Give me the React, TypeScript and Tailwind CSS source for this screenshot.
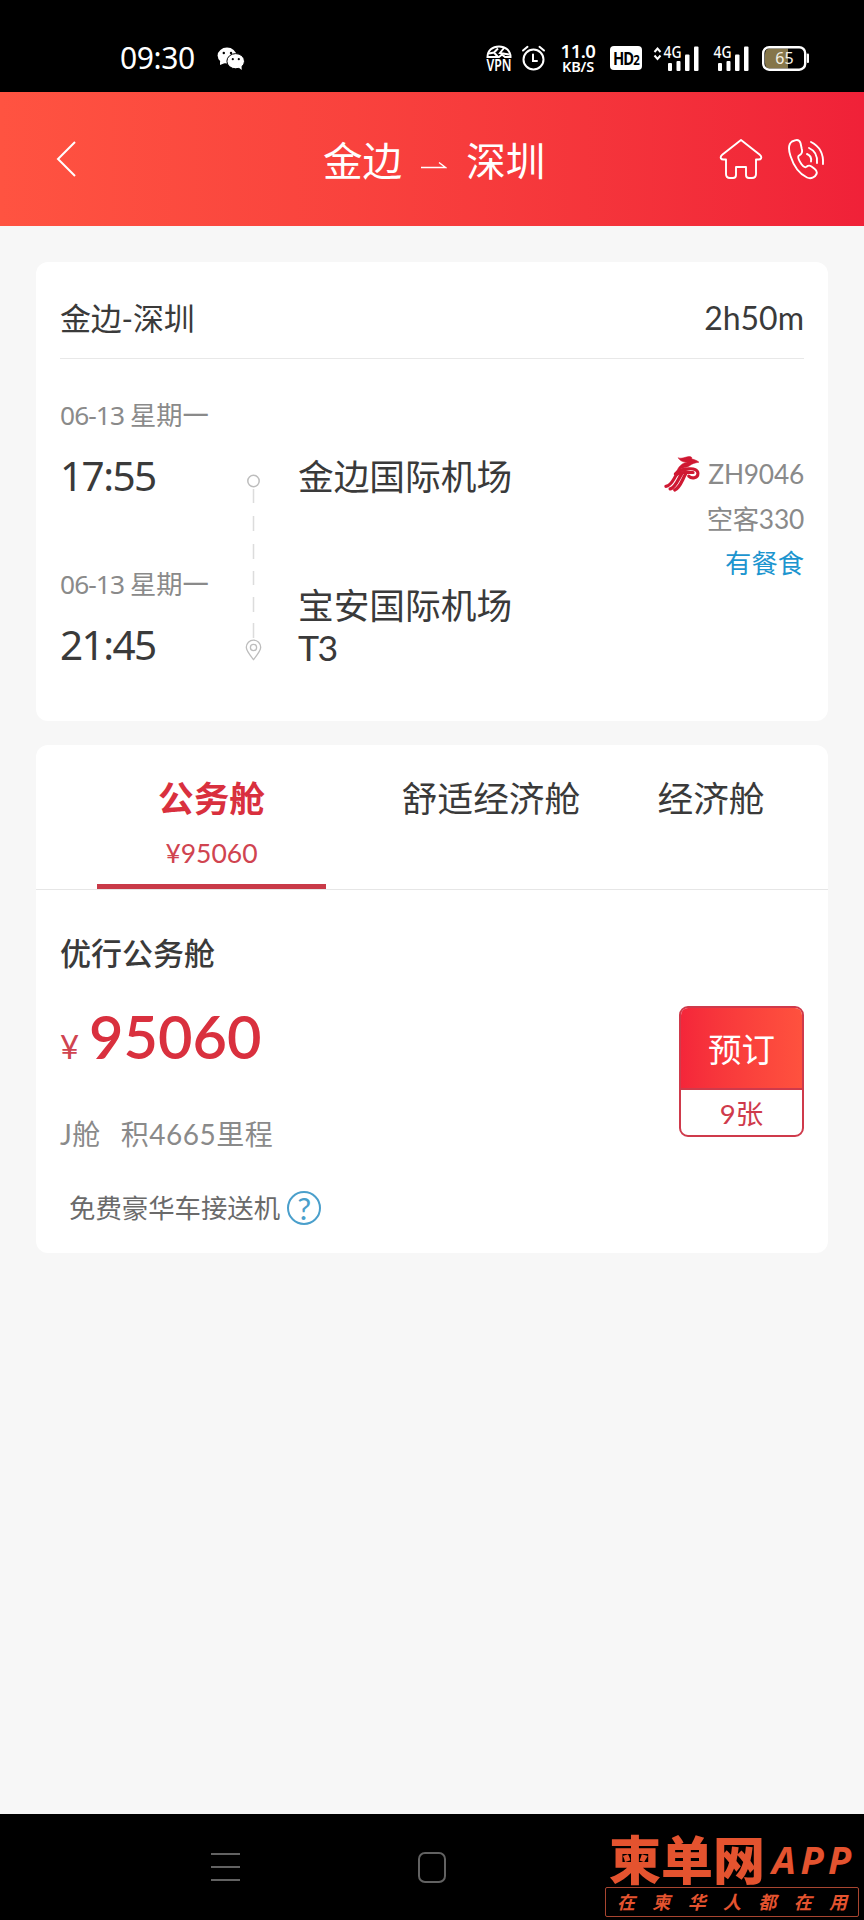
import React from 'react';
import { clsx } from 'clsx';

interface Leg {
  date: string;
  time: string;
  airport: string;
  terminal?: string;
}

interface Cabin {
  name: string;
  price?: string;
  className: string;
}

const legs: Leg[] = [
  { date: '06-13', time: '17:55', airport: '金边国际机场' },
  { date: '06-13', time: '21:45', airport: '宝安国际机场', terminal: 'T3' },
];

const cabins: Cabin[] = [
  { name: '公务舱', price: '¥95060', className: 'ml-[61px] w-[229px]' },
  { name: '舒适经济舱', className: 'ml-[70px] w-[190px]' },
  { name: '经济舱', className: 'ml-[65px] w-[120px]' },
];

const WechatIcon = () => (
  <svg className="ml-[20px] h-[23px] w-[28px]" viewBox="0 0 28 23">
    <ellipse cx="10" cy="8.6" rx="9.4" ry="8" fill="#fff" />
    <path d="M3 14l0 4 5-2z" fill="#fff" />
    <ellipse cx="18.7" cy="14.2" rx="8.8" ry="7.6" fill="#fff" stroke="#000" strokeWidth="1" />
    <path d="M21 20l3.8 3-.4-5z" fill="#fff" />
    <circle cx="6.8" cy="6" r="1.2" />
    <circle cx="14" cy="6" r="1.2" />
    <circle cx="15.8" cy="12.2" r="1.1" />
    <circle cx="21.8" cy="12.2" r="1.1" />
  </svg>
);

const VpnIcon = () => (
  <svg className="h-[28px] w-[26px] overflow-visible" viewBox="0 0 26 28" fill="none" stroke="#fff">
    <path d="M1.500 13C1.500 6.500 6.500 2.500 13 2.500s11.500 4 11.500 10.500H19l-3-2.500-3 2.500z" strokeWidth="2" />
    <path d="M3 9.500l5-1 4-4M8 8.500l4 4.500M18 4l-4 5 9 1.500" strokeWidth="2" />
    <text x="13" y="27" textAnchor="middle" fill="#fff" stroke="none" fontSize="16" fontWeight="600" textLength="25" lengthAdjust="spacingAndGlyphs">VPN</text>
  </svg>
);

const AlarmIcon = () => (
  <svg className="ml-[9px] h-[28px] w-[25px]" viewBox="0 0 25 28" fill="none" stroke="#fff" strokeWidth="2" strokeLinecap="round">
    <circle cx="12.500" cy="15.500" r="10" />
    <path d="M12 10.500V17h4M2 6.500l4.500-3.700M23 6.500l-4.500-3.700" />
  </svg>
);

const SignalIcon = ({ arrows }: { arrows?: boolean }) => (
  <svg
    className={clsx('h-[28px] overflow-visible', arrows ? 'ml-[11px] w-[47px]' : 'ml-[14px] w-[36px]')}
    viewBox={arrows ? '0 0 47 28' : '11 0 36 28'}
    fill="#fff"
  >
    {arrows && <path d="M1.500 8l3-3.500 3 3.500M1.500 11.500l3 3.500 3-3.500" fill="none" stroke="#fff" strokeWidth="2" />}
    <text x="10.500" y="14" fontSize="16" fontWeight="500" textLength="18" lengthAdjust="spacingAndGlyphs">4G</text>
    <rect x="15" y="19" width="4" height="8" rx="1" />
    <rect x="23.500" y="17" width="4" height="10" rx="1" />
    <rect x="32" y="10.500" width="4.500" height="16.500" rx="1" />
    <rect x="41" y="2.500" width="4.500" height="24.500" rx="1" />
  </svg>
);

const BatteryIcon = () => (
  <svg className="ml-[12px] h-[28px] w-[48px]" viewBox="0 0 48 28">
    <path d="M8 4.500h18v20H8q-5 0-5-6v-8q0-6 5-6z" fill="#85764a" />
    <rect x="1.200" y="3.200" width="42" height="22.500" rx="6" fill="none" stroke="#fff" strokeWidth="2.400" />
    <rect x="44.800" y="9.500" width="2.200" height="9.500" rx="1" fill="#fff" />
    <text x="22.500" y="20" textAnchor="middle" fill="#f4f1e4" fontSize="16">65</text>
  </svg>
);

const StatusBar = () => (
  <div className="flex h-[92px] items-center bg-black pt-[24px] pl-[120px] font-['Noto_Sans','Noto_Sans_CJK_SC',sans-serif] text-white">
    <span className="w-[77px] text-[30px] leading-none tracking-[-0.4px]">09:30</span>
    <WechatIcon />
    <div className="ml-[241px] flex items-center">
      <VpnIcon />
      <AlarmIcon />
      <div className="ml-[14px] flex w-[36px] flex-col items-center font-semibold">
        <span className="text-[18.500px] leading-[15px] tracking-[-0.5px]">11.0</span>
        <span className="text-[14.500px] leading-[16px] tracking-[-0.2px]">KB/S</span>
      </div>
      <div className="ml-[14px] flex h-[24px] w-[32px] items-center justify-center rounded-[4px] bg-white text-[18px] font-bold leading-none tracking-[-1px] text-black">
        <span className="inline-block origin-center scale-x-[0.820]">HD<span className="text-[14px]">2</span></span>
      </div>
      <SignalIcon arrows />
      <SignalIcon />
      <BatteryIcon />
    </div>
  </div>
);

const TitleBar = () => (
  <header className="flex h-[134px] items-center bg-linear-to-r from-[#ff5341] to-[#f02138] pl-[56px] text-white">
    <svg className="h-[38px] w-[22px]" viewBox="0 0 22 38" fill="none" stroke="#fff" strokeWidth="2">
      <path d="M19 2L2 19l17 17" />
    </svg>
    <h1 className="ml-[245px] flex items-center whitespace-nowrap pt-[4px] text-[39.600px] leading-[50px]">
      <span>金边</span>
      <svg className="mr-[19px] ml-[19px] mt-[12px] h-[12px] w-[26px]" viewBox="0 0 26 12" fill="none" stroke="#fff" strokeWidth="1.500">
        <path d="M0 6.500h24.500L18 1.500" />
      </svg>
      <span>深圳</span>
    </h1>
    <svg className="ml-[174px] h-[42px] w-[44px]" viewBox="0 0 44 42" fill="none" stroke="#fff" strokeWidth="1.900" strokeLinejoin="round">
      <path d="M22 2L3.500 16.500q-2.500 2-1.500 4 .5 1 2.500 1H7V36q0 4 4 4h3q3 0 3-3v-8h10v8q0 3 3 3h3q4 0 4-4V21.500h2.500q2 0 2.500-1 1-2-1.500-4z" />
    </svg>
    <svg className="ml-[24px] h-[42px] w-[40px]" viewBox="0 0 40 42" fill="none" stroke="#fff" strokeWidth="1.900" strokeLinecap="round" strokeLinejoin="round">
      <path d="M8 2.300L5 3.500C1.500 6 1.500 12 3.500 18c3 9.500 9 18 16.500 21.500 4 1.800 8-.2 9.500-3.500.8-2-.2-3.800-2-5.200l-3-2.300c-1.800-1.300-3.600-1-5 .3-2 1.200-3.200.2-5-2.500-2.200-3.300-4-6.800-3-8.300l2.300-1.700c1.700-1.500 1.600-3 1-5.300L13.500 5C12.500 2.300 10.500 1.500 8 2.300z" />
      <path d="M20 16q5 2 4 7.500M22 10q9 4 8 15M24 4q13 6.500 12 22" />
    </svg>
  </header>
);

const AirlineLogo = () => (
  <svg className="mr-[8px] h-[36px] w-[36px]" viewBox="0 0 35 35" fill="none" stroke="#cf1832" strokeLinecap="round" strokeLinejoin="round">
    <path d="M14 2c4 .8 6-.8 10-1.500 2.500-.3 3.500 1 3 2.500 2 .3 4.500 1 7 3-4 .8-6.500 1.200-9.500 3.700-3.500 2-8 1.500-12 5.300 1.500-5.500 6-8.500 11-9.500-3 .6-7.500.4-9.500-3.500z" fill="#cf1832" strokeWidth=".5" />
    <path d="M11 17.500c3-4 8-4.500 13-5 5-.6 9 1 9 4.500 0 4.500-6 5.500-9 2.500" strokeWidth="3" />
    <path d="M1.800 29.500c5-.5 7-6 9.500-10 1.500-2.500 5-3.500 8-3.500h9" strokeWidth="3" />
    <path d="M6 32c5-1 7.500-9 11-14.500M10.500 33c5-2 7-9.500 10.500-15.500" strokeWidth="3.200" />
  </svg>
);

const Timeline = () => (
  <svg className="mt-[115px] h-[188px] w-[19px]" viewBox="0 0 19 188" fill="none" stroke="#bdbdbd">
    <circle cx="9.500" cy="7" r="5.700" strokeWidth="1.500" />
    <path d="M9.500 15v14M9.500 42v15M9.500 70v15M9.500 97v14M9.500 123v15M9.500 149v15" stroke="#dcdcdc" strokeWidth="1.500" />
    <path d="M9.500 185.500C6 181 2.300 177 2.300 173.300a7.200 7.200 0 0 1 14.400 0c0 3.700-3.700 7.700-7.200 12.200z" strokeWidth="1.300" />
    <circle cx="9.500" cy="173.500" r="3.100" strokeWidth="1.300" />
  </svg>
);

const FlightCard = () => (
  <section className="h-[459px] rounded-[12px] bg-white px-[24px] text-[#3a3a3a]">
    <div className="flex h-[97px] items-center justify-between border-b border-[#e8e8e8] pt-[15px] text-[31px] leading-[40px]">
      <span className="tracking-[-0.2px]">金边-深圳</span>
      <span className="text-[32px]">2h50m</span>
    </div>

    <div className="flex">
      <div className="w-[184px] pt-[39px]">
        {legs.map((leg, i) => (
          <div key={leg.time} className={clsx(i > 0 && 'mt-[67px]')}>
            <div className="flex h-[36px] items-center whitespace-nowrap text-[26.300px] text-[#8a8a8a]">
              <span className="w-[70px] font-['Noto_Sans',sans-serif] tracking-[-0.900px]">{leg.date}</span>
              <span>星期一</span>
            </div>
            <div className="mt-[18px] flex h-[48px] items-center font-['Noto_Sans',sans-serif] text-[40.500px] tracking-[-1.600px]">
              {leg.time}
            </div>
          </div>
        ))}
      </div>

      <Timeline />

      <div className="ml-[35px] w-[230px] pt-[97px] text-[35.700px] leading-[42px]">
        {legs.map((leg, i) => (
          <div key={leg.airport} className={clsx(i > 0 && 'mt-[87px]')}>
            <p className="whitespace-nowrap">{leg.airport}</p>
            {leg.terminal && <p className="tracking-[-1.500px]">{leg.terminal}</p>}
          </div>
        ))}
      </div>

      <div className="flex flex-1 flex-col items-end pt-[93px] text-[26.300px] leading-[44.700px] text-[#8a8a8a]">
        <div className="flex items-center">
          <AirlineLogo />
          <span className="tracking-[-0.2px]">ZH9046</span>
        </div>
        <span className="tracking-[-0.2px]">空客330</span>
        <span className="text-[#1c95cf]">有餐食</span>
      </div>
    </div>
  </section>
);

const CabinCard = () => (
  <section className="mt-[24px] h-[508px] rounded-[12px] bg-white text-[#3a3a3a]">
    {/* Tabs */}
    <div className="flex h-[145px] border-b border-[#e6e6e6]">
      {cabins.map((cabin) => (
        <div
          key={cabin.name}
          className={clsx(
            'flex h-[144px] flex-col items-center pt-[30px] text-[35.700px] leading-[48px]',
            cabin.className,
            cabin.price && 'border-b-[5px] border-[#c93a48] font-bold text-[#d9303e]'
          )}
        >
          <span className="whitespace-nowrap">{cabin.name}</span>
          {cabin.price && <span className="mt-[12px] text-[26.500px] font-normal leading-[36px] text-[#d04450]">{cabin.price}</span>}
        </div>
      ))}
    </div>

    {/* Fare */}
    <div className="flex justify-between px-[24px]">
      <div>
        <h2 className="mt-[43px] text-[31px] font-medium leading-[40px]">优行公务舱</h2>
        <div className="mt-[28px] flex h-[72px] items-baseline text-[#d9303e]">
          <span className="w-[29px] text-[33px] leading-none text-[#d04450]">¥</span>
          <span className="text-[59.500px] font-semibold leading-[70px]">95060</span>
        </div>
        <div className="mt-[43px] flex gap-[20px] text-[28px] leading-[36px] tracking-[0.500px] text-[#8a8a8a]">
          <span>J舱</span>
          <span>积4665里程</span>
        </div>
        <div className="mt-[38px] flex items-center pl-[9px] text-[26.400px] leading-[36px] text-[#6a6a6a]">
          免费豪华车接送机
          <span className="ml-[7px] flex size-[34px] items-center justify-center rounded-full border-2 border-[#4a9fcb] text-[31px] leading-none text-[#4a9fcb]">
            ?
          </span>
        </div>
      </div>

      <button className="mt-[116px] flex h-[131px] w-[125px] flex-col overflow-hidden rounded-[9px] border-2 border-[#cf3a4b] bg-white">
        <span className="-mx-[2px] -mt-[2px] flex h-[84px] w-[125px] items-center justify-center border-b-2 border-[#cf3a4b] bg-linear-to-r from-[#f4253a] to-[#ff523e] pt-[4px] text-[33.500px] text-white">
          预订
        </span>
        <span className="flex w-full flex-1 items-center justify-center pt-[3px] text-[27.500px] text-[#cf3a4b]">9张</span>
      </button>
    </div>
  </section>
);

const Watermark = () => (
  <div className="ml-auto mr-[5px] w-[254px] pt-[14px] text-[#e4532f]">
    <div className="flex h-[59px] items-center">
      <span className="ml-[4px] font-['Noto_Sans_CJK_SC',sans-serif] text-[52px] font-black leading-none">柬单网</span>
      <span className="ml-[7px] mt-[2px] font-['Noto_Sans',sans-serif] text-[38px] font-bold italic leading-none tracking-[4.500px]">APP</span>
    </div>
    <div className="flex h-[30px] items-center justify-between rounded-[2px] border border-[#a84530] px-[11px] text-[18px] font-bold italic leading-none">
      {'在柬华人都在用'.split('').map((char, i) => (
        <span key={i}>{char}</span>
      ))}
    </div>
  </div>
);

const NavBar = () => (
  <footer className="flex h-[106px] bg-black">
    <svg className="mt-[38px] ml-[211px] h-[30px] w-[29px]" viewBox="0 0 29 30" stroke="#626262" strokeWidth="2.200">
      <path d="M0 2h29M0 15h29M0 28h29" />
    </svg>
    <div className="mt-[38px] ml-[178px] h-[31px] w-[28px] rounded-[7px] border-2 border-[#626262]" />
    <Watermark />
  </footer>
);

export default function App() {
  return (
    <div className="flex h-[1920px] w-[864px] flex-col overflow-hidden bg-[#f7f7f7] font-['Lato','Noto_Sans_CJK_SC',sans-serif]">
      <StatusBar />
      <TitleBar />
      <main className="flex-1 px-[36px] pt-[36px]">
        <FlightCard />
        <CabinCard />
      </main>
      <NavBar />
    </div>
  );
}
